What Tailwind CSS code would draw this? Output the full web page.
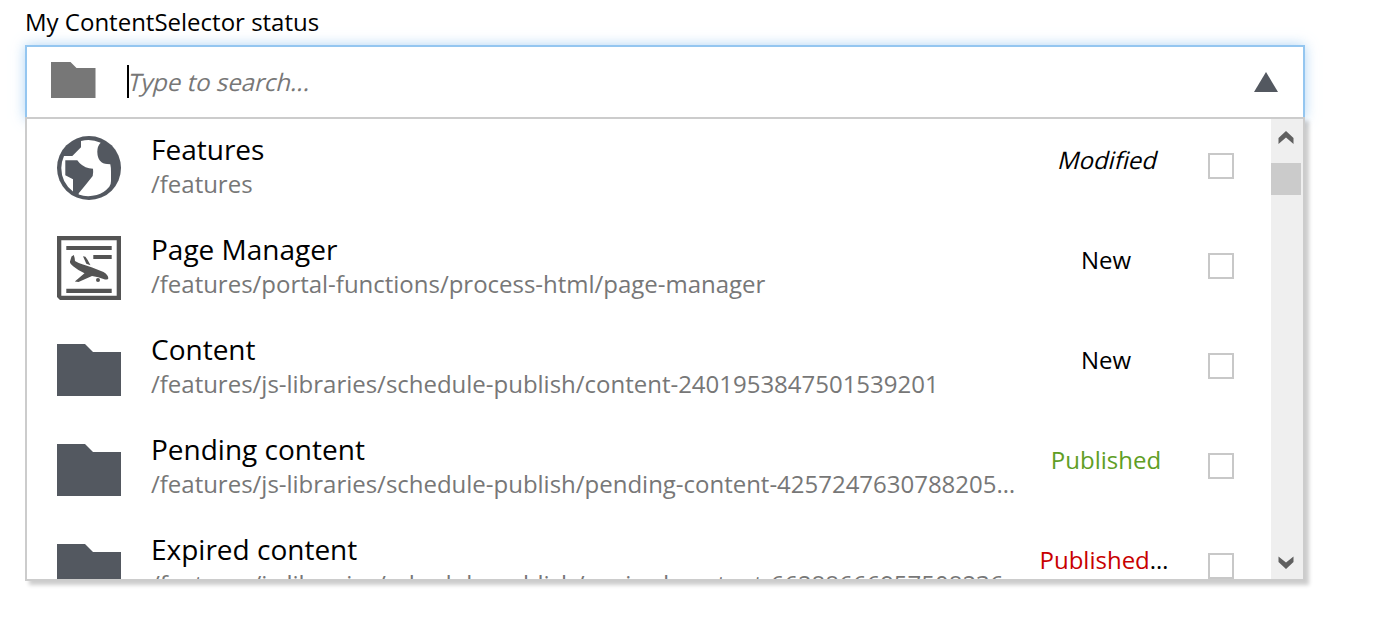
<!DOCTYPE html>
<html lang="en">
<head>
<meta charset="utf-8">
<title>Content selector</title>
<script src="https://cdn.jsdelivr.net/npm/@tailwindcss/browser@4"></script>
</head>
<body class="h-[632px] overflow-hidden bg-white pl-[25px] font-['Open_Sans',sans-serif] text-black">
<svg class="hidden">
  <symbol id="folder" viewBox="0 0 64 52"><path d="M0 0H28L36 8H64V52H0Z" fill="currentColor"/></symbol>
</svg>
<label class="block h-[45px] pt-[5px] text-2xl leading-[33px] whitespace-nowrap"><span>My ContentSelector status</span></label>
<div class="relative flex h-[74px] w-[1280px] items-center border-2 border-b-0 border-[#94c6f0] bg-white pb-[2px] shadow-[0_0_12px_rgba(148,198,240,0.75)]">
  <svg class="ml-6 h-9 w-[45px] -translate-y-[2px] text-[#777]" viewBox="0 0 45 36"><path d="M0 0H19.5L25.500 6H44.500V36H0Z" fill="currentColor"/></svg>
  <span class="mb-px ml-[31px] h-[33px] w-[2px] bg-black"></span>
  <span class="mb-[2px] inline-block -skew-x-[14deg] text-2xl leading-[33px] text-[#777]">Type to search...</span>
  <svg class="mr-[25px] ml-auto h-5 w-6" viewBox="0 0 24 20"><path d="M12 0L24 20H0Z" fill="#535860"/></svg>
</div>
<div class="relative -mt-[2px] flex h-[464px] w-[1280px] border-2 border-[#ccc] bg-white shadow-[4px_4px_4px_rgba(0,0,0,0.2)]">
  <div class="h-[460px] flex-1 overflow-hidden">
    <div class="flex h-[100px] pl-[30px]">
      <svg class="mt-[17px] size-16 shrink-0" viewBox="0 0 64 64"><circle cx="32" cy="32" r="32" fill="#535860"/><path d="M24 5Q34 2.500 43.700 6.700Q40.300 10 40.300 15.700Q40.500 22 43 24.700Q46 28 50 28L53.300 28.300Q54 31 54 36V45Q54 49 52.300 50.700Q47 57 39.700 59Q30 61.500 21.700 58.500V57.300L28.300 49.300L35.700 40Q36.500 36 36 32.700Q28 32.500 22.500 27L20.300 24.300H8.300V39.300L16 43.300V55.500Q4.300 46.500 4.300 32Q4.300 26 7 20H15.300L24 11.300Z" fill="#fff"/></svg>
      <div class="ml-[30px] w-[865px] pt-[11px]"><div class="text-[28px] leading-[38px]">Features</div><div class="truncate text-2xl leading-8 tracking-[-0.015px] text-[#777]">/features</div></div>
      <div class="ml-[20px] w-[140px] pt-[24px] text-center text-2xl leading-[33px]"><span class="ml-[6px] inline-block -skew-x-[14deg]">Modified</span></div>
      <span class="mt-[34px] ml-[32px] size-[26px] border-2 border-[#c8c8c8]"></span>
    </div>
    <div class="flex h-[100px] pl-[30px]">
      <svg class="mt-[17px] size-16 shrink-0" viewBox="0 0 64 64" fill="#545454"><path fill-rule="evenodd" d="M0 0H64V64H3L0 61ZM4.300 4.300V59.700H59.700V4.300Z"/><path d="M9.300 10H54.700V14H9.300ZM36.300 19H54.700V23H36.300ZM9.300 52.700H54.700V57H9.300Z"/><path d="M14.500 20.500L16.800 19Q17.600 21 18 25Q22 27.500 26 28.600L34.500 31.200L46.500 36Q51.500 39 51.300 42.500Q51 44 48 43.400Q41 40.800 35 40L21.500 46L17.800 45.500L27.500 37.300Q21 34.300 16.500 30.500Q12.500 27.500 13 25.500ZM26 20.200L28.400 20.800Q31 24 33.500 29.200L29.300 27.800Z"/><circle cx="41" cy="44" r="2"/></svg>
      <div class="ml-[30px] w-[865px] pt-[11px]"><div class="text-[28px] leading-[38px]">Page Manager</div><div class="truncate text-2xl leading-8 tracking-[-0.015px] text-[#777]">/features/portal-functions/process-html/page-manager</div></div>
      <div class="ml-[20px] w-[140px] pt-[24px] text-center text-2xl leading-[33px]">New</div>
      <span class="mt-[34px] ml-[32px] size-[26px] border-2 border-[#c8c8c8]"></span>
    </div>
    <div class="flex h-[100px] pl-[30px]">
      <svg class="mt-[25px] h-[52px] w-16 shrink-0 text-[#535860]"><use href="#folder"/></svg>
      <div class="ml-[30px] w-[865px] pt-[11px]"><div class="text-[28px] leading-[38px]">Content</div><div class="truncate text-2xl leading-8 tracking-[-0.015px] text-[#777]">/features/js-libraries/schedule-publish/content-2401953847501539201</div></div>
      <div class="ml-[20px] w-[140px] pt-[24px] text-center text-2xl leading-[33px]">New</div>
      <span class="mt-[34px] ml-[32px] size-[26px] border-2 border-[#c8c8c8]"></span>
    </div>
    <div class="flex h-[100px] pl-[30px]">
      <svg class="mt-[25px] h-[52px] w-16 shrink-0 text-[#535860]"><use href="#folder"/></svg>
      <div class="ml-[30px] w-[865px] pt-[11px]"><div class="text-[28px] leading-[38px]">Pending content</div><div class="whitespace-nowrap text-2xl leading-8 tracking-[-0.015px] text-[#777]">/features/js-libraries/schedule-publish/pending-content-4257247630788205…</div></div>
      <div class="ml-[20px] w-[140px] pt-[24px] text-center text-2xl leading-[33px] text-[#609e24]">Published</div>
      <span class="mt-[34px] ml-[32px] size-[26px] border-2 border-[#c8c8c8]"></span>
    </div>
    <div class="flex h-[100px] pl-[30px]">
      <svg class="mt-[25px] h-[52px] w-16 shrink-0 text-[#535860]"><use href="#folder"/></svg>
      <div class="ml-[30px] w-[865px] pt-[11px]"><div class="text-[28px] leading-[38px]">Expired content</div><div class="whitespace-nowrap text-2xl leading-8 tracking-[-0.015px] text-[#777]">/features/js-libraries/schedule-publish/expired-content-66288666957508236</div></div>
      <div class="ml-[15px] w-[146px] pt-[24px] text-center text-2xl leading-[33px]"><span class="text-[#c80000]">Published</span>…</div>
      <span class="mt-[34px] ml-[31px] size-[26px] border-2 border-[#c8c8c8]"></span>
    </div>
  </div>
  <div class="flex w-8 flex-col items-start bg-[#efefef]">
    <svg class="mt-3 ml-[7px] h-[14px] w-4" viewBox="0 0 16 14"><path d="M8 0L15.500 7V13L8 6.500L.5 13V7Z" fill="#606060"/></svg>
    <span class="mt-[18px] h-8 w-[30px] bg-[#cbcbcb]"></span>
    <svg class="mt-auto mb-[9px] ml-[7px] h-[14px] w-4" viewBox="0 0 16 14"><path d="M8 13L15.500 6V.5L8 6.500L.5 .5V6Z" fill="#606060"/></svg>
  </div>
</div>
</body>
</html>
